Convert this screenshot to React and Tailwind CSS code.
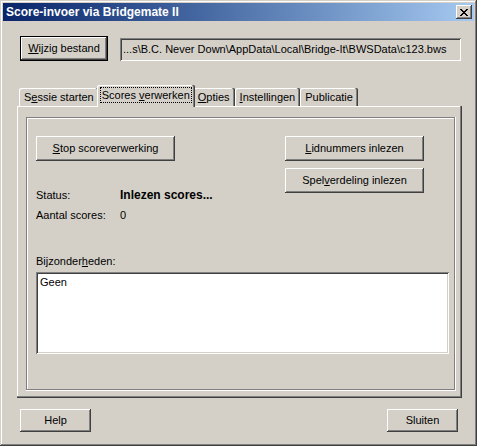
import React from "react";

const raised =
  "shadow-[inset_-1px_-1px_0_#404040,inset_1px_1px_0_#ffffff,inset_-2px_-2px_0_#808080,inset_2px_2px_0_#d4d0c8]";
const sunken =
  "shadow-[inset_1px_1px_0_#808080,inset_-1px_-1px_0_#ffffff,inset_2px_2px_0_#404040,inset_-2px_-2px_0_#d4d0c8]";
const etched =
  "shadow-[inset_-1px_-1px_0_#ffffff,inset_1px_1px_0_#808080,inset_-2px_-2px_0_#808080,inset_2px_2px_0_#ffffff]";

function Button({ children, className = "" }) {
  return (
    <div className={`flex items-center justify-center bg-[#d4d0c8] ${raised} ${className}`}>
      {children}
    </div>
  );
}

function Tab({ children, active }) {
  if (active) {
    return (
      <div className="relative z-10 -mx-[2px] -mb-px flex h-[22px] items-start rounded-t-[2px] bg-[#d4d0c8] px-[3px] pt-[2px] shadow-[inset_-1px_0_0_#404040,inset_-2px_0_0_#808080,inset_1px_1px_0_#ffffff]">
        <span className="flex h-[16px] items-center px-[2px] outline outline-1 outline-dotted outline-black -outline-offset-1">
          {children}
        </span>
      </div>
    );
  }
  return (
    <div className="flex h-[18px] items-center rounded-t-[2px] bg-[#d4d0c8] px-[5px] pt-px shadow-[inset_-1px_0_0_#404040,inset_-2px_0_0_#808080,inset_1px_1px_0_#ffffff]">
      {children}
    </div>
  );
}

export default function App() {
  return (
    <div className="h-[446px] w-[477px] bg-[#d4d0c8] p-[3px] text-[11px] leading-none text-black font-['Liberation_Sans',Arial,sans-serif] shadow-[inset_-1px_-1px_0_#404040,inset_1px_1px_0_#d4d0c8,inset_-2px_-2px_0_#808080,inset_2px_2px_0_#ffffff]">
      {/* title bar */}
      <div className="flex h-[18px] items-center justify-between bg-gradient-to-r from-[#0a246a] to-[#a6caf0] pl-[3px] pr-[2px]">
        <span className="text-[12px] font-bold text-white">Score-invoer via Bridgemate II</span>
        <div className={`flex h-[14px] w-[16px] items-center justify-center bg-[#d4d0c8] ${raised}`}>
          <svg width="8" height="7" viewBox="0 0 8 7" shapeRendering="crispEdges">
            <path
              d="M0 0h2v1h-2zM6 0h2v1h-2zM1 1h2v1h-2zM5 1h2v1h-2zM2 2h4v1h-4zM3 3h2v1h-2zM2 4h4v1h-4zM1 5h2v1h-2zM5 5h2v1h-2zM0 6h2v1h-2zM6 6h2v1h-2z"
              fill="#000"
            />
          </svg>
        </div>
      </div>

      {/* body */}
      <div className="flex flex-col pl-[14px] pt-[15px]">
        <div className="ml-[3px] flex items-start">
          <div className="h-[25px] w-[88px] border border-black">
            <Button className="h-full w-full">
              <span>
                <u>W</u>ijzig bestand
              </span>
            </Button>
          </div>
          <div className={`ml-[12px] mt-[2px] flex h-[23px] w-[341px] items-center bg-[#d4d0c8] pl-[3px] ${sunken}`}>
            ...s\B.C. Never Down\AppData\Local\Bridge-It\BWSData\c123.bws
          </div>
        </div>

        {/* tabs */}
        <div className="mt-[24px] flex h-[21px] items-end pl-[2px]">
          <Tab>
            <span>
              S<u>e</u>ssie starten
            </span>
          </Tab>
          <Tab active>
            <span>
              Scores <u>v</u>erwerken
            </span>
          </Tab>
          <Tab>
            <span>
              <u>O</u>pties
            </span>
          </Tab>
          <Tab>
            <span>
              <u>I</u>nstellingen
            </span>
          </Tab>
          <Tab>
            <span>Publicatie</span>
          </Tab>
        </div>

        {/* tab page */}
        <div className="h-[292px] w-[445px] pl-[9px] pt-[11px] shadow-[inset_-1px_-1px_0_#404040,inset_-2px_-2px_0_#808080,inset_1px_1px_0_#ffffff]">
          <div className={`h-[274px] w-[430px] pl-[10px] pr-[32px] pt-[19px] ${etched}`}>
            <div className="flex justify-between">
              <div className="flex flex-col">
                <Button className="h-[25px] w-[139px]">
                  <span>
                    <u>S</u>top scoreverwerking
                  </span>
                </Button>
                <div className="mt-[24px] flex leading-[20px]">
                  <span className="w-[84px]">Status:</span>
                  <span className="text-[12px] font-bold">Inlezen scores...</span>
                </div>
                <div className="flex leading-[20px]">
                  <span className="w-[84px]">Aantal scores:</span>
                  <span>0</span>
                </div>
              </div>
              <div className="flex flex-col gap-[7px]">
                <Button className="h-[25px] w-[139px]">
                  <span>
                    <u>L</u>idnummers inlezen
                  </span>
                </Button>
                <Button className="h-[25px] w-[139px]">
                  <span>
                    Spel<u>v</u>erdeling inlezen
                  </span>
                </Button>
              </div>
            </div>
            <div className="mt-[26px] leading-[20px]">
              Bijzonder<u>h</u>eden:
            </div>
            <div className={`mt-px h-[82px] w-[413px] bg-white px-[4px] pt-[5px] ${sunken}`}>Geen</div>
          </div>
        </div>

        {/* bottom buttons */}
        <div className="ml-[3px] mt-[11px] flex w-[438px] justify-between">
          <Button className="h-[23px] w-[71px]">Help</Button>
          <Button className="h-[23px] w-[71px]">Sluiten</Button>
        </div>
      </div>
    </div>
  );
}
